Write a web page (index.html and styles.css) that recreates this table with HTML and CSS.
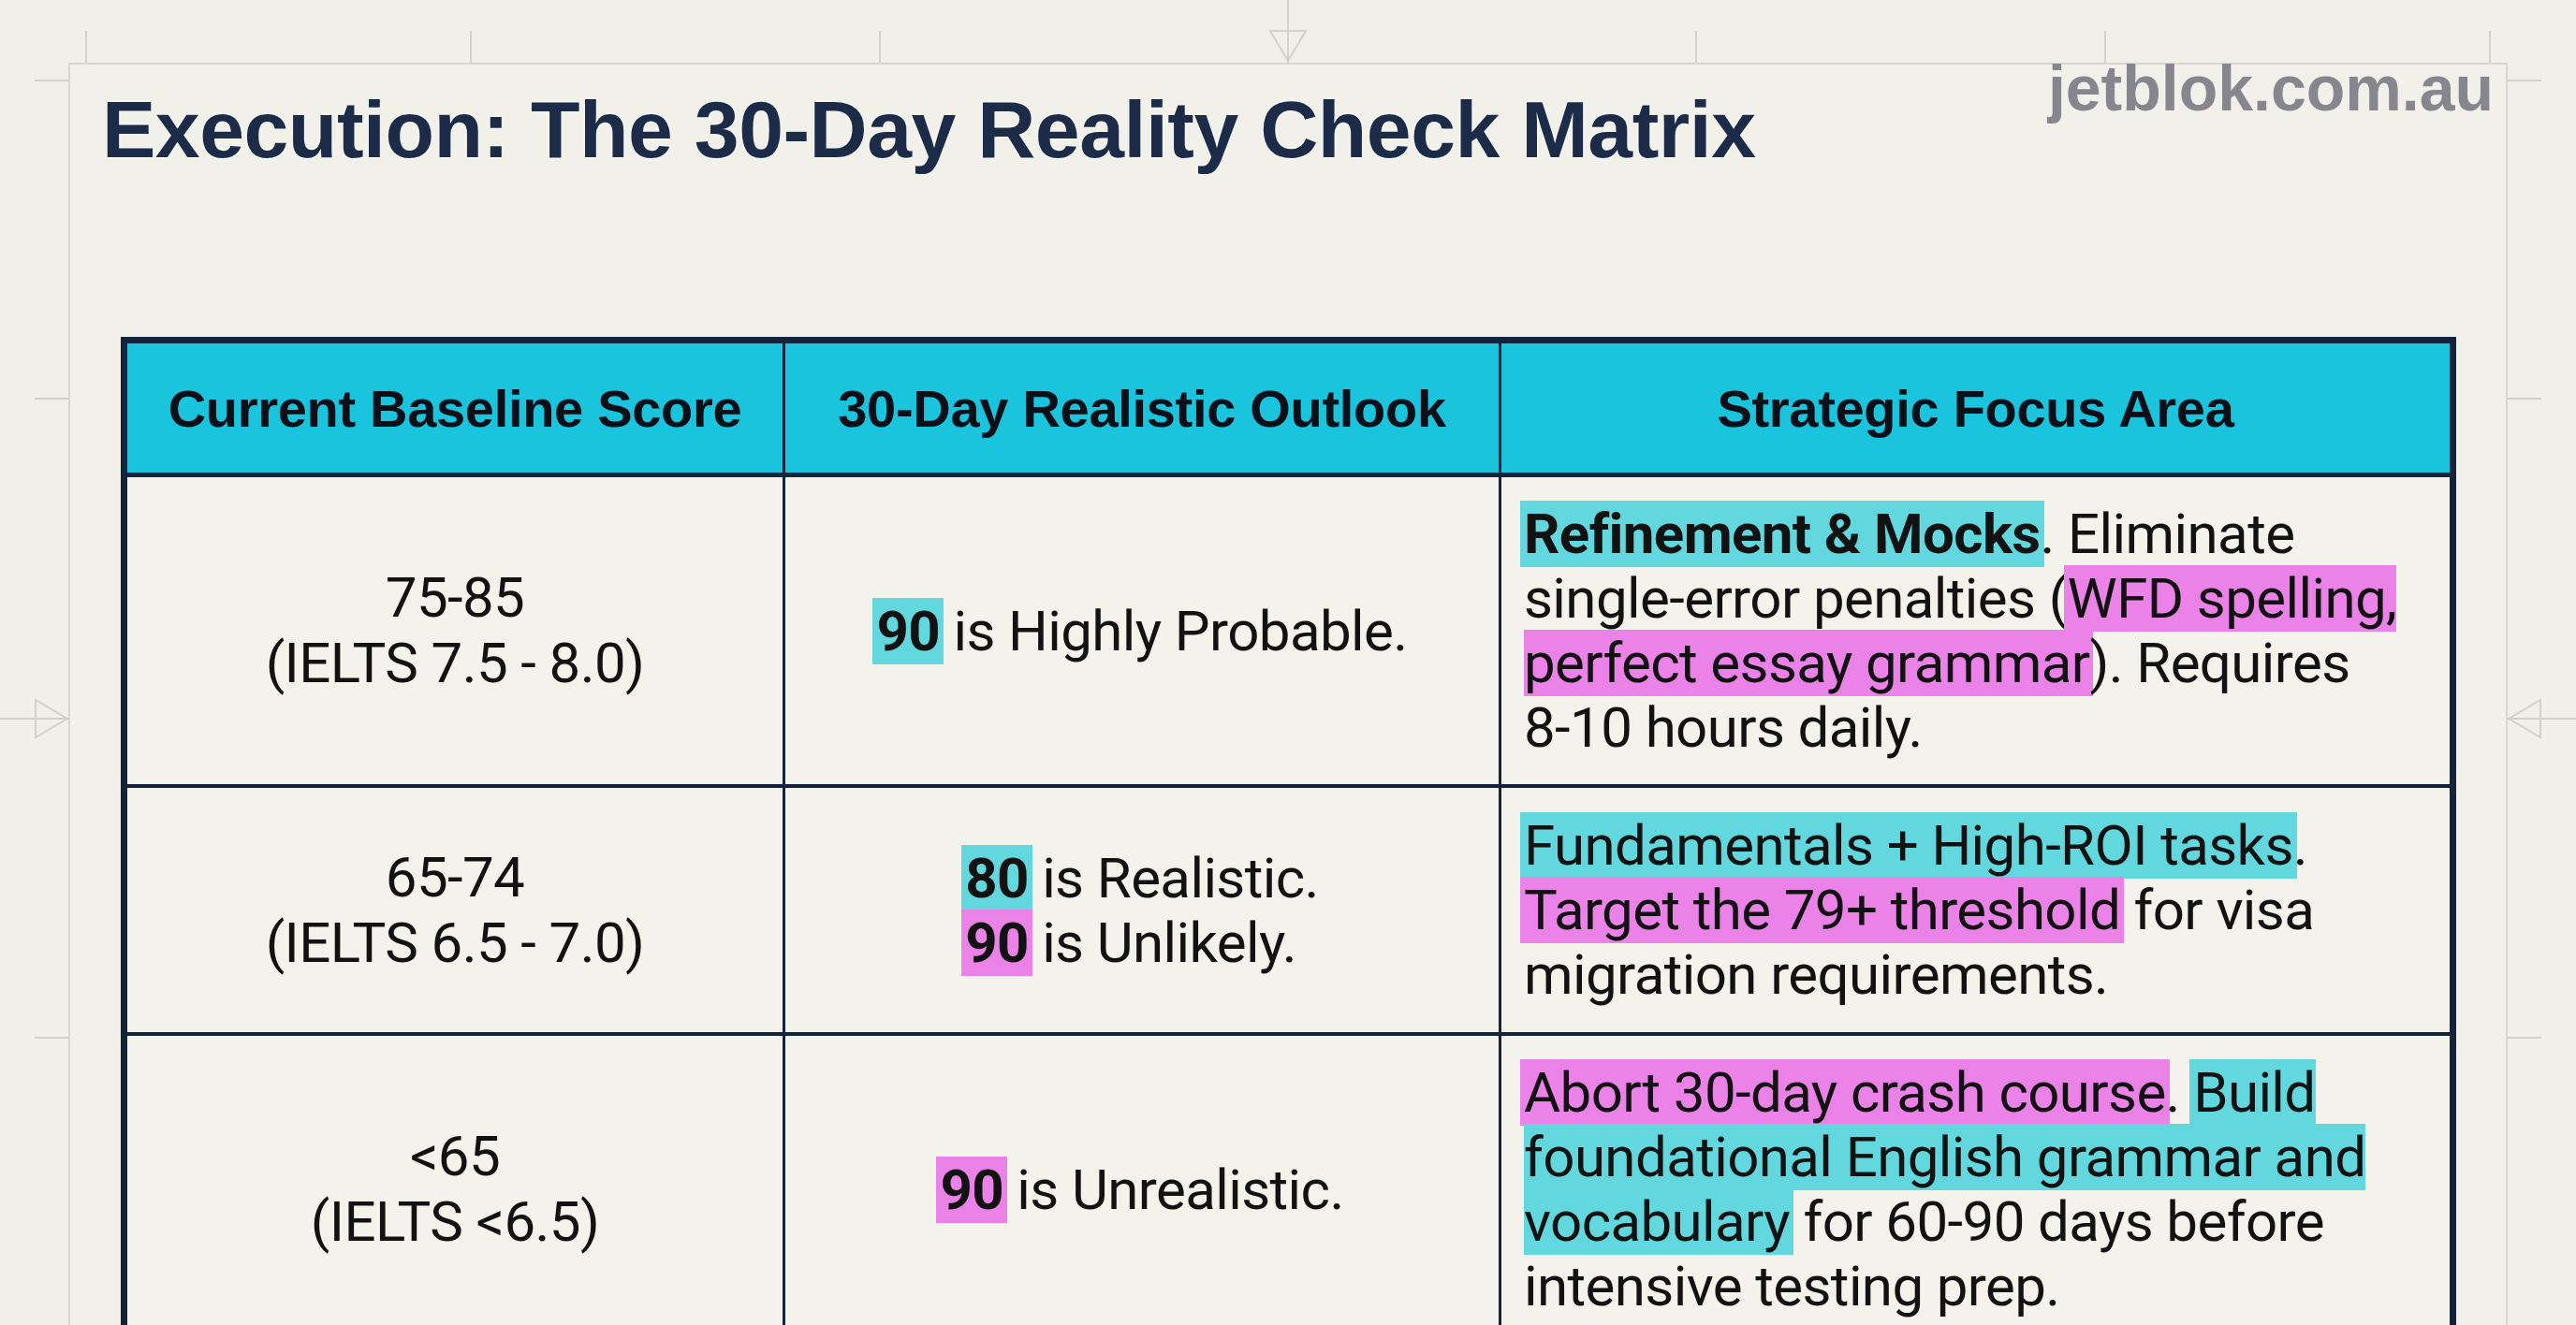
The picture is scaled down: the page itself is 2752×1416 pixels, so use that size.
FILE: index.html
```html
<!DOCTYPE html>
<html lang="en">
<head>
<meta charset="utf-8">
<title>Execution: The 30-Day Reality Check Matrix</title>
<link rel="stylesheet" href="styles.css">
</head>
<body>
<svg class="marks" width="2752" height="1416" viewBox="0 0 2752 1416" aria-hidden="true">
  <g class="tick">
    <line x1="92" y1="33" x2="92" y2="67"/>
    <line x1="503" y1="33" x2="503" y2="67"/>
    <line x1="940" y1="33" x2="940" y2="67"/>
    <line x1="1812" y1="33" x2="1812" y2="67"/>
    <line x1="2249" y1="33" x2="2249" y2="67"/>
    <line x1="2660" y1="33" x2="2660" y2="67"/>
    <line x1="1376" y1="0" x2="1376" y2="67"/>
    <polygon points="1357,33 1395,33 1376,65"/>
    <line x1="37" y1="86" x2="73" y2="86"/>
    <line x1="37" y1="426" x2="73" y2="426"/>
    <line x1="37" y1="1109" x2="73" y2="1109"/>
    <line x1="0" y1="768" x2="73" y2="768"/>
    <polygon points="38,748 38,788 72,768"/>
    <line x1="2679" y1="86" x2="2715" y2="86"/>
    <line x1="2679" y1="426" x2="2715" y2="426"/>
    <line x1="2679" y1="1109" x2="2715" y2="1109"/>
    <line x1="2679" y1="768" x2="2752" y2="768"/>
    <polygon points="2714,748 2714,788 2680,768"/>
  </g>
</svg>
<main class="frame">
  <header class="topbar">
    <h1 class="title">Execution: The 30-Day Reality Check Matrix</h1>
    <div class="brand">jetblok.com.au</div>
  </header>
  <table class="matrix">
    <colgroup><col class="c1"><col class="c2"><col class="c3"></colgroup>
    <thead>
      <tr><th>Current Baseline Score</th><th>30-Day Realistic Outlook</th><th>Strategic Focus Area</th></tr>
    </thead>
    <tbody>
      <tr class="tall">
        <td class="score">75-85<br>(IELTS 7.5 - 8.0)</td>
        <td class="outlook"><div class="stack"><span class="num hl-c">90</span> is Highly Probable.</div></td>
        <td class="focus"><b class="hl-c">Refinement &amp; Mocks</b>. Eliminate<br>single-error penalties (<span class="hl-p">WFD spelling,<br>perfect essay grammar</span>). Requires<br>8-10 hours daily.</td>
      </tr>
      <tr class="mid">
        <td class="score">65-74<br>(IELTS 6.5 - 7.0)</td>
        <td class="outlook"><div class="stack"><span class="num hl-c">80</span> is Realistic.<br><span class="num hl-p">90</span> is Unlikely.</div></td>
        <td class="focus"><span class="hl-c">Fundamentals + High-ROI tasks</span>.<br><span class="hl-p">Target the 79+ threshold</span> for visa<br>migration requirements.</td>
      </tr>
      <tr class="tall">
        <td class="score">&lt;65<br>(IELTS &lt;6.5)</td>
        <td class="outlook"><div class="stack"><span class="num hl-p">90</span> is Unrealistic.</div></td>
        <td class="focus"><span class="hl-p">Abort 30-day crash course</span>. <span class="hl-c">Build<br>foundational English grammar and<br>vocabulary</span> for 60-90 days before<br>intensive testing prep.</td>
      </tr>
    </tbody>
  </table>
</main>
</body>
</html>
```

FILE: styles.css
```css
html, body {
  margin: 0;
  padding: 0;
}

body {
  position: relative;
  width: 2752px;
  height: 1416px;
  overflow: hidden;
  background: #f0f0e9;
  font-family: "Roboto", "Liberation Sans", sans-serif;
  color: #121212;
}

.marks {
  position: absolute;
  top: 0;
  left: 0;
  pointer-events: none;
}

.tick line,
.tick polygon {
  stroke: #d2d2ca;
  stroke-width: 2;
  fill: none;
}

.frame {
  display: block;
  margin: 67px 73px 0;
  height: 1400px;
  border: 2px solid #d6d6cf;
  border-bottom: none;
  background: #f1f1ea;
  box-sizing: border-box;
}

.topbar {
  display: flex;
  justify-content: space-between;
  align-items: flex-start;
  padding: 0 13px 0 34px;
}

.title {
  margin: 26px 0 0;
  font-family: "Liberation Sans", Arial, sans-serif;
  font-weight: 700;
  font-size: 86px;
  line-height: 1;
  letter-spacing: -0.5px;
  color: #1b2b48;
  text-shadow: 0 0 3px #ffffff;
}

.brand {
  margin-top: -9px;
  font-family: "Liberation Sans", Arial, sans-serif;
  font-weight: 700;
  font-size: 68px;
  line-height: 1;
  color: #86868e;
}

.matrix {
  margin: 179px 0 0 54px;
  width: 2488px;
  table-layout: fixed;
  border-collapse: collapse;
  border: 7px solid #13233b;
}

.c1 { width: 705px; }
.c2 { width: 765px; }
.c3 { width: 1018px; }

.matrix th {
  height: 138px;
  padding: 0;
  background: #19c4dc;
  border: 3px solid #13233b;
  border-bottom: 5px solid #13233b;
  font-family: "Liberation Sans", Arial, sans-serif;
  font-weight: 700;
  font-size: 56px;
  letter-spacing: -0.3px;
  color: #0b1018;
  text-align: center;
  vertical-align: middle;
}

.matrix td {
  padding: 0;
  background: #f3f3ec;
  border: 3px solid #13233b;
  border-top: 4px solid #13233b;
  border-bottom: 4px solid #13233b;
  font-size: 60px;
  line-height: 69px;
  letter-spacing: -0.6px;
  vertical-align: middle;
}

.tall td { height: 328px; }
.mid td { height: 261px; }

.score {
  text-align: center;
  line-height: 70px !important;
}

.outlook {
  text-align: center;
}

.stack {
  display: inline-block;
  text-align: left;
}

.focus {
  text-align: left;
  padding-left: 24px !important;
}

.num {
  font-weight: 700;
}

.focus b {
  font-weight: 700;
}

.hl-c,
.hl-p {
  padding: 0 4px;
  margin: 0 -4px;
}

.hl-c { background: #62d8de; }
.hl-p { background: #ea82e8; }
```
